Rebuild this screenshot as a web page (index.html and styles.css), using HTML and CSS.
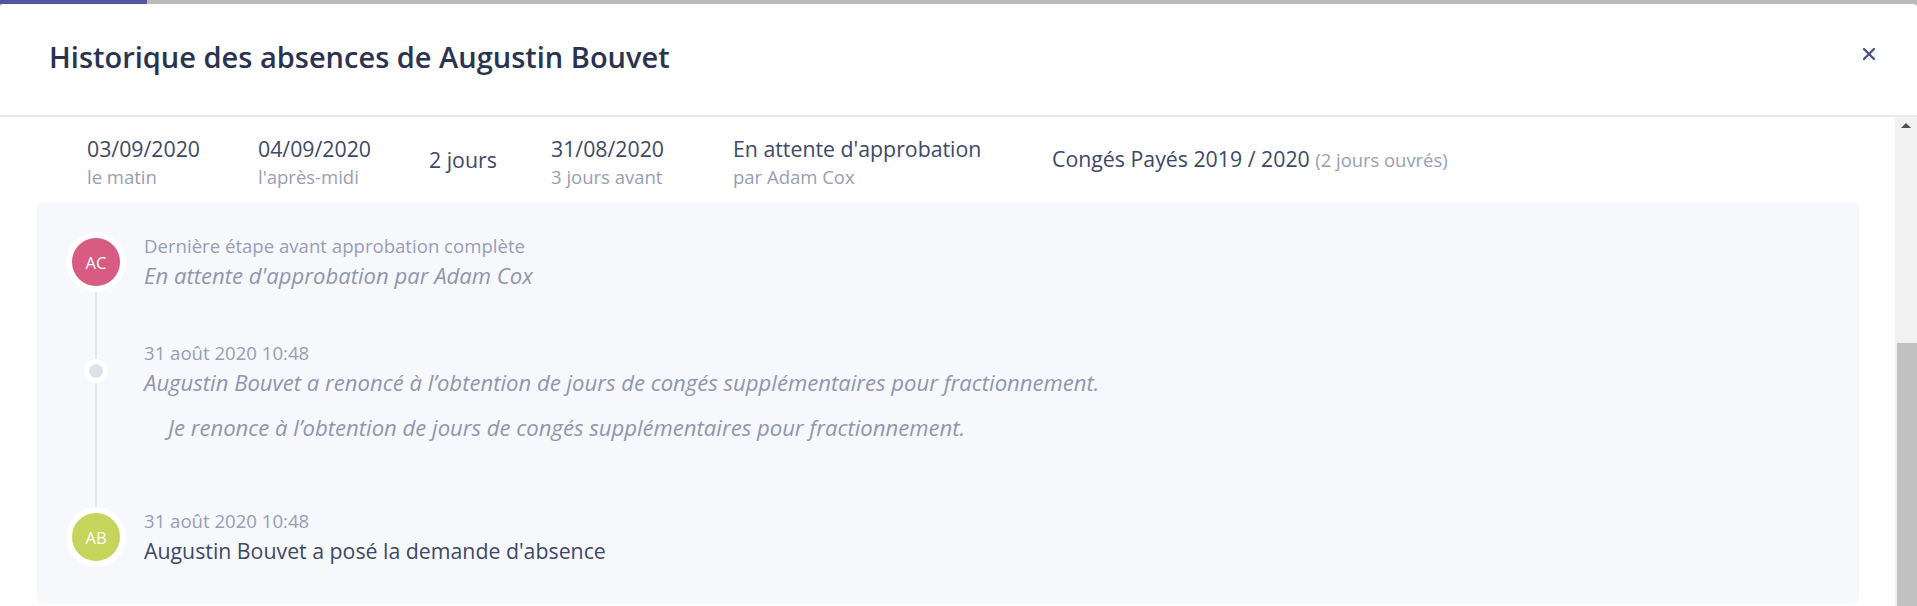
FILE: index.html
```html
<!DOCTYPE html>
<html lang="fr">
<head>
<meta charset="utf-8">
<title>Historique des absences</title>
<link rel="stylesheet" href="styles.css">
</head>
<body>
<div class="topbar"><div class="topbar-progress"></div></div>
<div class="modal">
  <header class="modal-header">
    <h1 class="modal-title">Historique des absences de Augustin Bouvet</h1>
    <button class="modal-close" type="button" aria-label="Fermer">
      <svg width="14" height="14" viewBox="0 0 14 14"><path d="M2 2 L12 12 M12 2 L2 12" stroke="currentColor" stroke-width="2.4" stroke-linecap="round"/></svg>
    </button>
  </header>
  <div class="modal-body-wrap">
    <div class="modal-body">
      <div class="summary">
        <div class="cell"><div class="main">03/09/2020</div><div class="sub">le matin</div></div>
        <div class="cell"><div class="main">04/09/2020</div><div class="sub">l'après-midi</div></div>
        <div class="cell cell-single"><div class="main">2 jours</div></div>
        <div class="cell"><div class="main">31/08/2020</div><div class="sub">3 jours avant</div></div>
        <div class="cell"><div class="main">En attente d'approbation</div><div class="sub">par Adam Cox</div></div>
        <div class="cell cell-single"><div class="main">Congés Payés 2019 / 2020 <span class="muted">(2 jours ouvrés)</span></div></div>
      </div>
      <div class="history">
        <div class="event event-first">
          <div class="marker"><span class="avatar avatar-ac">AC</span></div>
          <div class="event-text">
            <div class="event-meta">Dernière étape avant approbation complète</div>
            <div class="event-desc italic">En attente d'approbation par Adam Cox</div>
          </div>
        </div>
        <div class="event event-second">
          <div class="marker"><span class="dot"></span></div>
          <div class="event-text">
            <div class="event-meta">31 août 2020 10:48</div>
            <div class="event-desc italic">Augustin Bouvet a renoncé à l’obtention de jours de congés supplémentaires pour fractionnement.</div>
            <div class="event-comment italic">Je renonce à l’obtention de jours de congés supplémentaires pour fractionnement.</div>
          </div>
        </div>
        <div class="event event-third">
          <div class="marker"><span class="avatar avatar-ab">AB</span></div>
          <div class="event-text">
            <div class="event-meta">31 août 2020 10:48</div>
            <div class="event-desc strong">Augustin Bouvet a posé la demande d'absence</div>
          </div>
        </div>
      </div>
    </div>
    <div class="scrollbar">
      <div class="scrollbar-up"></div>
      <div class="scrollbar-thumb"></div>
    </div>
  </div>
</div>
</body>
</html>
```

FILE: styles.css
```css
* { box-sizing: border-box; }

html, body {
  margin: 0;
  padding: 0;
  height: 606px;
  overflow: hidden;
  background: #bababa;
  font-family: "Open Sans", Lato, "Liberation Sans", sans-serif;
}

.topbar {
  height: 4px;
  background: #bababa;
}
.topbar-progress {
  width: 147px;
  height: 4px;
  background: #53569e;
}

.modal {
  height: 602px;
  background: #ffffff;
  border-radius: 4px 4px 0 0;
  display: flex;
  flex-direction: column;
}

.modal-header {
  height: 113px;
  flex: none;
  display: flex;
  align-items: center;
  justify-content: space-between;
  padding: 0 41px 5px 49px;
  border-bottom: 2px solid #e6e9f4;
}

.modal-title {
  margin: 0;
  font-size: 29px;
  line-height: 40px;
  font-weight: 600;
  color: #2a3350;
  letter-spacing: 0;
}

.modal-close {
  border: 0;
  background: none;
  padding: 0;
  width: 14px;
  height: 14px;
  margin-bottom: 6px;
  color: #4b5577;
  display: flex;
}

.modal-body-wrap {
  flex: 1;
  display: flex;
  min-height: 0;
}

.modal-body {
  flex: 1;
  overflow: hidden;
  padding-top: 18px;
}

.summary {
  display: grid;
  grid-template-columns: 171px 171px 122px 182px 319px auto;
  padding-left: 87px;
  color: #3e4869;
}
.cell-single {
  align-self: center;
  margin-bottom: 7px;
}
.main {
  font-size: 21.3px;
  line-height: 28px;
  white-space: nowrap;
}
.sub {
  font-size: 18.5px;
  line-height: 28px;
  color: #979eb6;
  white-space: nowrap;
}
.muted {
  font-size: 18.4px;
  color: #979eb6;
}

.history {
  position: relative;
  margin: 11px 36px 0 37px;
  height: 402px;
  padding: 30px 29px 37px;
  background: #f7f8fc;
  border-radius: 6px;
}
.history::before {
  content: "";
  position: absolute;
  left: 58px;
  top: 90px;
  bottom: 97px;
  width: 2px;
  background: #e4e7f0;
}

.event {
  position: relative;
  display: flex;
  align-items: flex-start;
  gap: 18px;
}
.event-second { margin-top: 47px; }
.event-third { margin-top: 64px; }

.marker {
  width: 60px;
  flex: none;
  display: flex;
  justify-content: center;
}
.event-second .marker { padding-top: 20px; }

.avatar {
  width: 60px;
  height: 60px;
  border-radius: 50%;
  border: 6px solid #ffffff;
  display: flex;
  align-items: center;
  justify-content: center;
  color: #ffffff;
  font-size: 16.5px;
}
.avatar-ac { background: #d75b82; }
.avatar-ab { background: #c5d55c; }

.dot {
  width: 24px;
  height: 24px;
  border-radius: 50%;
  border: 5px solid #ffffff;
  background: #dfe2ec;
}

.event-text {
  padding-top: 1px;
}
.event-meta {
  font-size: 18.6px;
  line-height: 26px;
  color: #979eb6;
  white-space: nowrap;
}
.event-desc {
  font-size: 21.3px;
  line-height: 32px;
  white-space: nowrap;
}
.event-desc.strong {
  line-height: 34px;
}
.italic {
  font-style: italic;
  font-size: 22.1px;
  color: #8f96ae;
}
.strong {
  color: #3e4869;
}
.event-comment {
  margin-top: 13px;
  padding-left: 24px;
  line-height: 32px;
  white-space: nowrap;
}

.scrollbar {
  width: 22px;
  flex: none;
  background: #f1f1f1;
  display: flex;
  flex-direction: column;
  align-items: flex-end;
}
.scrollbar-up {
  align-self: center;
  margin-top: 6px;
  width: 0;
  height: 0;
  border-left: 5.5px solid transparent;
  border-right: 5.5px solid transparent;
  border-bottom: 5px solid #505050;
}
.scrollbar-thumb {
  margin-top: 215px;
  width: 20px;
  flex: 1;
  background: #c1c1c1;
}
```
